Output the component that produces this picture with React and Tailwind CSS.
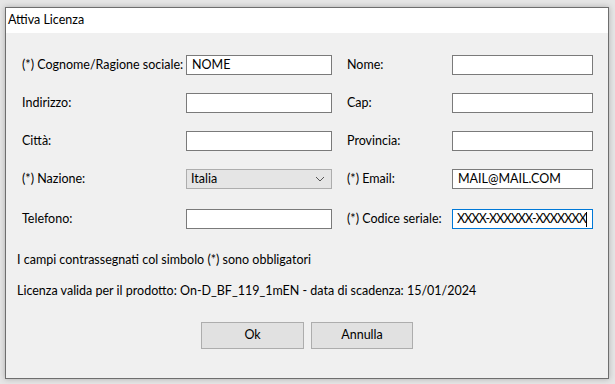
import React from 'react';

const font = { fontFamily: 'Lato, "Noto Sans", sans-serif' };

const Field = ({ value, focused, select }) => {
    if (select) {
        return (
            <div className="flex items-center justify-between h-[20px] border border-[#adadad] bg-[#e5e5e5] pl-[4px] pr-[6px]">
                <span>{value}</span>
                <svg width="10" height="6" viewBox="0 0 10 6" fill="none">
                    <path d="M1 1l4 4 4-4" stroke="#555" strokeWidth="1" />
                </svg>
            </div>
        );
    }
    return (
        <div className={`flex items-center h-[20px] bg-white border overflow-hidden ${focused ? 'border-[#0078d7] pl-[4px] tracking-[-0.9px]' : 'border-[#7a7a7a] px-[5px]'}`}>
            <span className="whitespace-nowrap">{value}</span>
            {focused && <span className="w-px h-[15px] bg-black shrink-0" />}
        </div>
    );
};

const Row = ({ left, right, className = '' }) => (
    <div className={`flex items-center ${className}`}>
        <div className="w-[180px] shrink-0 pl-[16px] whitespace-nowrap">{left.label}</div>
        <div className="w-[146px] shrink-0"><Field {...left} /></div>
        <div className="w-[15px] shrink-0" />
        <div className="w-[105px] shrink-0 whitespace-nowrap">{right.label}</div>
        <div className="w-[141px] shrink-0"><Field {...right} /></div>
    </div>
);

export default function App() {
    return (
        <div className="w-[615px] h-[384px] bg-[#e6e6e6] pt-[7px] pl-[5px] overflow-hidden text-[12.5px] text-black" style={font}>
            <div className="w-[604px] h-[372px] border border-[#6e6e6e] bg-[#f0f0f0] shadow-[0_0_6px_rgba(0,0,0,0.25)] flex flex-col">
                <div className="h-[25px] bg-white flex items-center pl-[2px]">Attiva Licenza</div>

                <div className="pt-[22px] flex flex-col">
                    <Row left={{ label: '(*) Cognome/Ragione sociale:', value: 'NOME' }} right={{ label: 'Nome:' }} />
                    <Row className="mt-[18px]" left={{ label: 'Indirizzo:' }} right={{ label: 'Cap:' }} />
                    <Row className="mt-[18px]" left={{ label: 'Città:' }} right={{ label: 'Provincia:' }} />
                    <Row className="mt-[18px]" left={{ label: '(*) Nazione:', value: 'Italia', select: true }} right={{ label: '(*) Email:', value: 'MAIL@MAIL.COM' }} />
                    <Row className="mt-[20px]" left={{ label: 'Telefono:' }} right={{ label: '(*) Codice seriale:', value: 'XXXX-XXXXXX-XXXXXXX', focused: true }} />
                </div>

                <div className="pl-[11px] mt-[22px] leading-[18px]">I campi contrassegnati col simbolo (*) sono obbligatori</div>
                <div className="pl-[11px] mt-[13px] leading-[18px]">Licenza valida per il prodotto: On-D_BF_119_1mEN - data di scadenza: 15/01/2024</div>

                <div className="flex gap-[7px] mt-[22px] pl-[195px]">
                    <button className="w-[103px] h-[27px] border border-[#adadad] bg-[#e1e1e1]">Ok</button>
                    <button className="w-[102px] h-[27px] border border-[#adadad] bg-[#e1e1e1]">Annulla</button>
                </div>
            </div>
        </div>
    );
}
